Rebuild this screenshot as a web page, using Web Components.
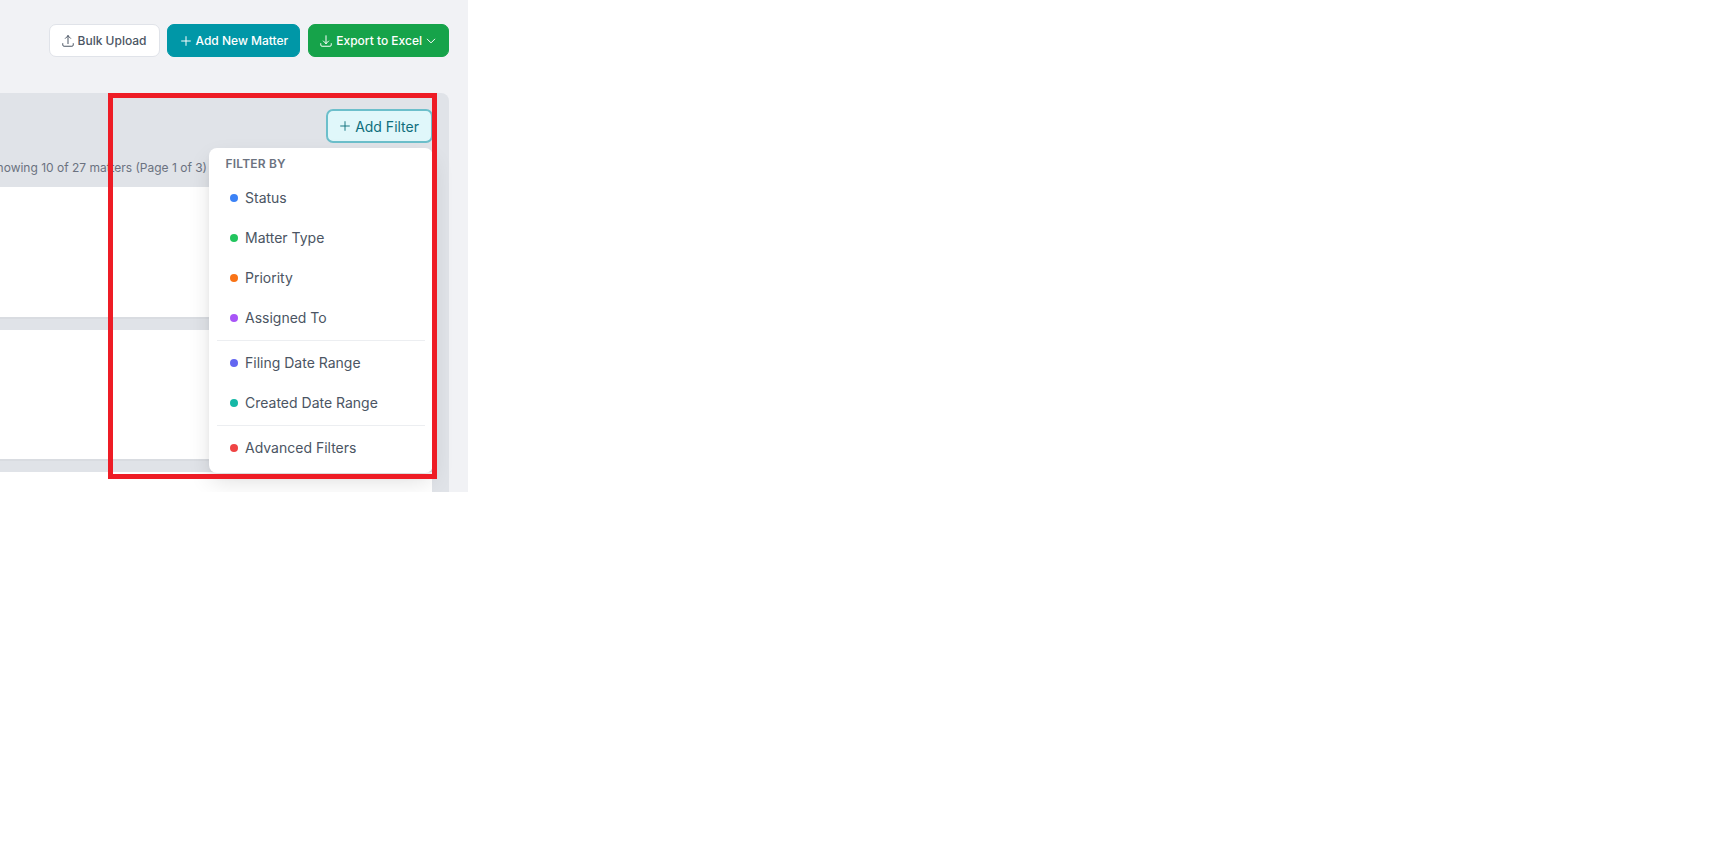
<!DOCTYPE html>
<html>
<head>
<meta charset="utf-8">
<title>Matters</title>
<style>
  body { margin: 0; background: #fff; font-family: Inter, "Liberation Sans", sans-serif; }
</style>
</head>
<body>
<matter-page>
  <app-button slot="actions" variant="plain" icon="upload">Bulk Upload</app-button>
  <app-button slot="actions" variant="teal" icon="plus">Add New Matter</app-button>
  <app-button slot="actions" variant="green" icon="download" caret>Export to Excel</app-button>

  <matter-panel slot="panel" summary="Showing 10 of 27 matters (Page 1 of 3)">
    <filter-menu slot="filter">
      <filter-item color="#3b82f6">Status</filter-item>
      <filter-item color="#22c55e">Matter Type</filter-item>
      <filter-item color="#f97316">Priority</filter-item>
      <filter-item color="#a855f7">Assigned To</filter-item>
      <menu-divider></menu-divider>
      <filter-item color="#6366f1">Filing Date Range</filter-item>
      <filter-item color="#14b8a6">Created Date Range</filter-item>
      <menu-divider></menu-divider>
      <filter-item color="#ef4444">Advanced Filters</filter-item>
    </filter-menu>
  </matter-panel>
</matter-page>

<script>
// icon paths, all on a 24 box
const ICONS = {
  upload: 'M3 16.5v2.25A2.25 2.25 0 0 0 5.25 21h13.5A2.25 2.25 0 0 0 21 18.75V16.5m-13.5-9L12 3m0 0 4.5 4.5M12 3v13.5',
  download: 'M3 16.5v2.25A2.25 2.25 0 0 0 5.25 21h13.5A2.25 2.25 0 0 0 21 18.75V16.5M16.5 12 12 16.5m0 0L7.5 12m4.5 4.5V3',
  plus: 'M12 4.5v15m7.5-7.5h-15',
  chevron: 'M19.5 8.25l-7.5 7.5-7.5-7.5'
};

const svgIcon = (name, size, width) =>
  `<svg width="${size}" height="${size}" viewBox="0 0 24 24" fill="none" stroke="currentColor" stroke-width="${width}" stroke-linecap="round" stroke-linejoin="round"><path d="${ICONS[name]}"/></svg>`;

class AppButton extends HTMLElement {
  constructor() {
    super();
    this.attachShadow({mode: 'open'});
    const icon = this.getAttribute('icon');
    const caret = this.hasAttribute('caret')
      ? `<span class="caret">${svgIcon('chevron', 12, 2)}</span>` : '';
    this.shadowRoot.innerHTML = `
      <style>
        :host { display: inline-flex; }
        button {
          display: flex; align-items: center; gap: 3px; height: 33px; padding: 0 11px 0 10.5px;
          border: 1px solid transparent; border-radius: 7px; cursor: pointer;
          font: 500 12px Inter, "Liberation Sans", sans-serif; white-space: nowrap;
        }
        svg { display: block; }
        :host([variant="plain"]) button { background: #fff; border-color: #e0e3e9; color: #4b5563; padding-right: 12px; }
        :host([variant="teal"]) button { background: #0097a7; color: #fff; border-color: #0097a7; }
        :host([variant="green"]) button { background: #16a34a; color: #fff; border-color: #16a34a; }
      </style>
      <button>${svgIcon(icon, 14, 1.7)}<slot></slot>${caret}</button>`;
  }
}

class MatterPage extends HTMLElement {
  constructor() {
    super();
    this.attachShadow({mode: 'open'});
    this.shadowRoot.innerHTML = `
      <style>
        :host {
          display: block; position: relative; width: 468px; height: 492px;
          overflow: hidden; background: #f1f2f5;
        }
        .actions { display: flex; justify-content: flex-end; gap: 7.5px; padding: 24px 19px 0 0; }
        .panel { margin: 36px 19px 0 0; }
        /* the red box marked on the screenshot, lies over the page */
        .mark {
          position: absolute; left: 108px; top: 93px; width: 319px; height: 375.5px;
          border: 5px solid #ee1c25; pointer-events: none;
        }
      </style>
      <div class="actions"><slot name="actions"></slot></div>
      <div class="panel"><slot name="panel"></slot></div>
      <div class="mark"></div>`;
  }
}

class MatterPanel extends HTMLElement {
  constructor() {
    super();
    this.attachShadow({mode: 'open'});
    this.shadowRoot.innerHTML = `
      <style>
        :host {
          display: block; position: relative; height: 399px; padding-right: 17px;
          background: #e0e3e8; border-radius: 0 8px 0 0; box-sizing: border-box;
        }
        .head {
          display: flex; flex-direction: column; align-items: flex-end; height: 94px;
          padding-top: 16px; box-sizing: border-box;
        }
        .add {
          display: flex; align-items: center; gap: 3px; height: 34px; padding: 0 12px 0 10px;
          margin-right: -1px; box-sizing: border-box; border: 2px solid #6cbfcb; border-radius: 7px;
          background: #e0f7fa; color: #0e6e7c; cursor: pointer;
          font: 400 14px Inter, "Liberation Sans", sans-serif; white-space: nowrap;
        }
        .add svg { display: block; }
        .summary {
          margin: 16.5px 225px 0 0; white-space: nowrap; line-height: 16px;
          font-size: 12px; color: #6b7280;
        }
        .row { height: 130px; background: #fff; border-bottom: 2px solid #d9dce1; margin-bottom: 11px; }
        .row.second { height: 129px; }
        .row.last { height: 40px; border: 0; margin: 0; }
        .menu { position: absolute; right: 16.5px; top: 55px; }
      </style>
      <div class="head">
        <button class="add">${svgIcon('plus', 14, 1.6)}<span>Add Filter</span></button>
        <div class="summary">${this.getAttribute('summary')}</div>
      </div>
      <div class="rows">
        <div class="row"></div>
        <div class="row second"></div>
        <div class="row last"></div>
      </div>
      <div class="menu"><slot name="filter"></slot></div>`;
  }
}

class FilterMenu extends HTMLElement {
  constructor() {
    super();
    this.attachShadow({mode: 'open'});
    this.shadowRoot.innerHTML = `
      <style>
        :host {
          display: block; width: 224px; height: 325px; box-sizing: border-box;
          padding: 8px; background: #fff; border-radius: 8px;
          box-shadow: 0 10px 25px -3px rgba(0,0,0,.14), 0 4px 10px -4px rgba(0,0,0,.1);
        }
        .title {
          height: 16px; line-height: 15px; padding-left: 9px; margin-bottom: 5.5px;
          font-size: 12px; font-weight: 600; letter-spacing: .2px; color: #6b7280;
        }
      </style>
      <div class="title">FILTER BY</div>
      <slot></slot>`;
  }
}

class FilterItem extends HTMLElement {
  constructor() {
    super();
    this.attachShadow({mode: 'open'});
    this.shadowRoot.innerHTML = `
      <style>
        :host {
          display: flex; align-items: center; gap: 7.5px; height: 40px; padding-left: 13px;
          font-size: 14px; color: #4b5563; cursor: pointer;
        }
        .dot { width: 8px; height: 8px; border-radius: 50%; background: ${this.getAttribute('color')}; }
      </style>
      <span class="dot"></span><slot></slot>`;
  }
}

class MenuDivider extends HTMLElement {
  constructor() {
    super();
    this.attachShadow({mode: 'open'});
    this.shadowRoot.innerHTML = `
      <style>
        :host { display: block; height: 1px; margin: 2px 0 2px; background: #eceef1; }
      </style>`;
  }
}

customElements.define('app-button', AppButton);
customElements.define('matter-page', MatterPage);
customElements.define('matter-panel', MatterPanel);
customElements.define('filter-menu', FilterMenu);
customElements.define('filter-item', FilterItem);
customElements.define('menu-divider', MenuDivider);
</script>
</body>
</html>
